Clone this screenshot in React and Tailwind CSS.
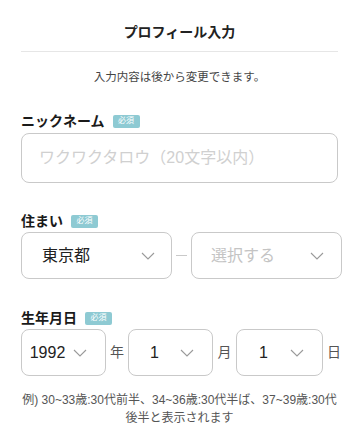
import React from "react";

const font = { fontFamily: '"Liberation Sans", "Noto Sans CJK JP", sans-serif' };

function Chevron() {
  return (
    <svg width="14" height="8" viewBox="0 0 14 8" className="shrink-0">
      <polyline points="1,1 7,7 13,1" fill="none" stroke="#9a9a9a" strokeWidth="1.1" />
    </svg>
  );
}

function Badge() {
  return (
    <span className="ml-[8px] inline-flex h-[13px] w-[27px] items-center justify-center rounded-[2px] bg-[#8ecad3] text-[8px] leading-none text-white">
      必須
    </span>
  );
}

function Label({ children }) {
  return (
    <div className="flex h-[20px] items-center">
      <span className="text-[14px] font-bold leading-[20px] text-[#1a1a1a]">{children}</span>
      <Badge />
    </div>
  );
}

export default function App() {
  return (
    <div className="min-h-[440px] w-[359px] bg-white px-[21px]" style={font}>
      {/* Header */}
      <div className="border-b border-[#e6e6e6] pb-[9px] pt-[22px] text-center text-[14px] font-bold leading-[20px] text-[#222]">
        プロフィール入力
      </div>

      <p className="mt-[17px] text-center text-[11.5px] leading-[16px] text-[#444]">
        入力内容は後から変更できます。
      </p>

      {/* Nickname */}
      <div className="mt-[26px]">
        <Label>ニックネーム</Label>
        <div className="mt-[2px] flex h-[50px] items-center rounded-[8px] border border-[#c9c9c9] px-[17px]">
          <span className="text-[16px] text-[#d0d0d0]">ワクワクタロウ（20文字以内）</span>
        </div>
      </div>

      {/* Address */}
      <div className="mt-[28px]">
        <Label>住まい</Label>
        <div className="mt-[1px] flex items-center">
          <div className="flex h-[47px] w-[151px] shrink-0 items-center justify-between rounded-[8px] border border-[#c9c9c9] pl-[20px] pr-[16px]">
            <span className="text-[16px] text-[#222]">東京都</span>
            <Chevron />
          </div>
          <div className="mx-[4px] h-px w-[11px] shrink-0 bg-[#c9c9c9]" />
          <div className="flex h-[47px] w-[151px] shrink-0 items-center justify-between rounded-[8px] border border-[#c9c9c9] pl-[19px] pr-[17px]">
            <span className="text-[16px] text-[#c4c4c4]">選択する</span>
            <Chevron />
          </div>
        </div>
      </div>

      {/* Birthday */}
      <div className="mt-[29px]">
        <Label>生年月日</Label>
        <div className="mt-[1px] flex items-center text-[16px] text-[#222]">
          <div className="flex h-[47px] w-[85px] shrink-0 items-center rounded-[8px] border border-[#c9c9c9] pr-[18px]">
            <span className="flex-1 text-center">1992</span>
            <Chevron />
          </div>
          <span className="w-[22px] shrink-0 text-center text-[14px] text-[#555]">年</span>
          <div className="flex h-[47px] w-[85px] shrink-0 items-center rounded-[8px] border border-[#c9c9c9] pr-[18px]">
            <span className="flex-1 text-center">1</span>
            <Chevron />
          </div>
          <span className="w-[23px] shrink-0 text-center text-[14px] text-[#555]">月</span>
          <div className="flex h-[47px] w-[87px] shrink-0 items-center rounded-[8px] border border-[#c9c9c9] pr-[18px]">
            <span className="flex-1 text-center">1</span>
            <Chevron />
          </div>
          <span className="w-[22px] shrink-0 text-center text-[14px] text-[#555]">日</span>
        </div>
      </div>

      <p className="mt-[15px] text-center text-[12px] leading-[18px] text-[#555]">
        例) 30~33歳:30代前半、34~36歳:30代半ば、37~39歳:30代
        <br />
        後半と表示されます
      </p>
    </div>
  );
}
